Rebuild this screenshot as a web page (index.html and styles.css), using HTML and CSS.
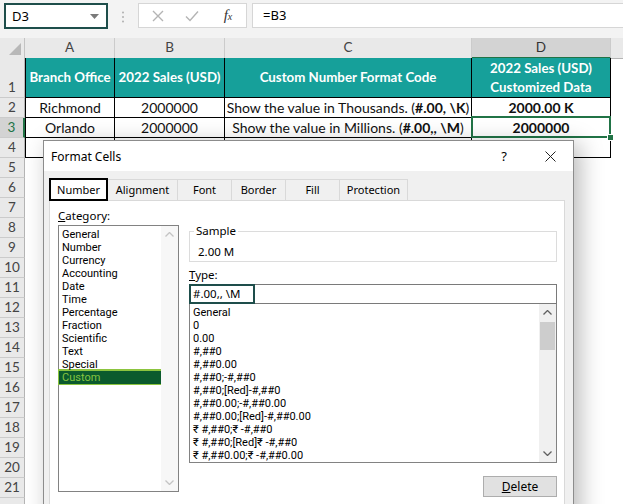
FILE: index.html
```html
<!DOCTYPE html>
<html lang="en">
<head>
  <meta charset="UTF-8">
  <title>Format Cells - Custom</title>
  <link rel="stylesheet" href="styles.css">
</head>
<body>
  <div class="fbar">
    <div class="namebox">
      <span>D3</span>
      <svg width="9" height="5" viewBox="0 0 9 5"><path d="M0 0h9L4.5 5z" fill="#7a7a7a"/></svg>
    </div>
    <svg class="dots" width="4" height="12" viewBox="0 0 4 12">
      <circle cx="2" cy="1.5" r="1" fill="#b0b0b0"/>
      <circle cx="2" cy="6" r="1" fill="#b0b0b0"/>
      <circle cx="2" cy="10.5" r="1" fill="#b0b0b0"/>
    </svg>
    <div class="fxbox">
      <svg width="12" height="12" viewBox="0 0 12 12"><path d="M1 1l10 10M11 1L1 11" stroke="#b4b4b4" stroke-width="1.4"/></svg>
      <svg width="14" height="12" viewBox="0 0 14 12"><path d="M1 6.5l4 4L13 1.5" stroke="#b4b4b4" stroke-width="1.4" fill="none"/></svg>
      <span class="fx">f<small>x</small></span>
    </div>
    <div class="formula">=B3</div>
  </div>

  <div class="sheet">
    <div class="row head">
      <div class="corner"><svg width="12" height="12" viewBox="0 0 12 12"><path d="M12 0v12H0z" fill="#b8b8b8"/></svg></div>
      <div class="ch">A</div>
      <div class="ch">B</div>
      <div class="ch">C</div>
      <div class="ch sel">D</div>
      <div class="ch last"></div>
    </div>
    <div class="row r1">
      <div class="rh">1</div>
      <div class="c t first">Branch Office</div>
      <div class="c t">2022 Sales (USD)</div>
      <div class="c t">Custom Number Format Code</div>
      <div class="c t">2022 Sales (USD)<br>Customized Data</div>
    </div>
    <div class="row">
      <div class="rh">2</div>
      <div class="c first">Richmond</div>
      <div class="c">2000000</div>
      <div class="c">Show the value in Thousands. (<b>#.00, \K</b>)</div>
      <div class="c"><b>2000.00 K</b></div>
    </div>
    <div class="row">
      <div class="rh sel">3</div>
      <div class="c first">Orlando</div>
      <div class="c">2000000</div>
      <div class="c">Show the value in Millions. (<b>#.00,, \M</b>)</div>
      <div class="c active"><b>2000000</b></div>
    </div>
    <div class="row">
      <div class="rh">4</div>
      <div class="c first"></div>
      <div class="c"></div>
      <div class="c"></div>
      <div class="c"></div>
    </div>
    <div class="row"><div class="rh">5</div></div>
    <div class="row"><div class="rh">6</div></div>
    <div class="row"><div class="rh">7</div></div>
    <div class="row"><div class="rh">8</div></div>
    <div class="row"><div class="rh">9</div></div>
    <div class="row"><div class="rh">10</div></div>
    <div class="row"><div class="rh">11</div></div>
    <div class="row"><div class="rh">12</div></div>
    <div class="row"><div class="rh">13</div></div>
    <div class="row"><div class="rh">14</div></div>
    <div class="row"><div class="rh">15</div></div>
    <div class="row"><div class="rh">16</div></div>
    <div class="row"><div class="rh">17</div></div>
    <div class="row"><div class="rh">18</div></div>
    <div class="row"><div class="rh">19</div></div>
    <div class="row"><div class="rh">20</div></div>
    <div class="row"><div class="rh">21</div></div>
    <div class="row"><div class="rh"></div></div>
  </div>

  <div class="dlg">
    <div class="dlg-head">
      <span class="dlg-title">Format Cells</span>
      <span class="hbtn">?</span>
      <span class="hbtn">
        <svg width="11" height="11" viewBox="0 0 11 11"><path d="M0.5 0.5l10 10M10.5 0.5l-10 10" stroke="#222" stroke-width="1"/></svg>
      </span>
    </div>
    <div class="dlg-body">
      <div class="tabs">
        <div class="tab on" style="width:59px">Number</div>
        <div class="tab" style="width:71px">Alignment</div>
        <div class="tab" style="width:55px">Font</div>
        <div class="tab" style="width:55px">Border</div>
        <div class="tab" style="width:55px">Fill</div>
        <div class="tab" style="width:69px">Protection</div>
      </div>
      <div class="panel">
        <div class="left">
          <div class="lbl"><u>C</u>ategory:</div>
          <div class="lst cat">
            <div class="items">
              <div>General</div>
              <div>Number</div>
              <div>Currency</div>
              <div>Accounting</div>
              <div>Date</div>
              <div>Time</div>
              <div>Percentage</div>
              <div>Fraction</div>
              <div>Scientific</div>
              <div>Text</div>
              <div>Special</div>
              <div class="pick">Custom</div>
            </div>
            <div class="sbar off">
              <div class="arr"><svg width="9" height="5" viewBox="0 0 9 5"><path d="M0.5 4.5l4-4 4 4" stroke="#c4c4c4" stroke-width="1.3" fill="none"/></svg></div>
              <div class="fill"></div>
              <div class="arr"><svg width="9" height="5" viewBox="0 0 9 5"><path d="M0.5 0.5l4 4 4-4" stroke="#c4c4c4" stroke-width="1.3" fill="none"/></svg></div>
            </div>
          </div>
        </div>
        <div class="right">
          <fieldset class="sample">
            <legend>Sample</legend>
            2.00 M
          </fieldset>
          <div class="lbl type"><u>T</u>ype:</div>
          <div class="inp"><span class="hl">#.00,, \M</span></div>
          <div class="lst codes">
            <div class="items">
              <div>General</div>
              <div>0</div>
              <div>0.00</div>
              <div>#,##0</div>
              <div>#,##0.00</div>
              <div>#,##0;-#,##0</div>
              <div>#,##0;[Red]-#,##0</div>
              <div>#,##0.00;-#,##0.00</div>
              <div>#,##0.00;[Red]-#,##0.00</div>
              <div>₹ #,##0;₹ -#,##0</div>
              <div>₹ #,##0;[Red]₹ -#,##0</div>
              <div>₹ #,##0.00;₹ -#,##0.00</div>
            </div>
            <div class="sbar">
              <div class="arr"><svg width="9" height="5" viewBox="0 0 9 5"><path d="M0.5 4.5l4-4 4 4" stroke="#606060" stroke-width="1.3" fill="none"/></svg></div>
              <div class="thumb"></div>
              <div class="fill"></div>
              <div class="arr"><svg width="9" height="5" viewBox="0 0 9 5"><path d="M0.5 0.5l4 4 4-4" stroke="#606060" stroke-width="1.3" fill="none"/></svg></div>
            </div>
          </div>
          <div class="btn"><u>D</u>elete</div>
        </div>
      </div>
    </div>
  </div>
</body>
</html>
```

FILE: styles.css
```css
body {
  margin: 0;
  width: 623px;
  height: 504px;
  overflow: hidden;
  position: relative;
  background: #fff;
  font-family: "Noto Sans", sans-serif;
  color: #000;
}

/* formula bar */
.fbar {
  height: 38px;
  box-sizing: border-box;
  background: #f3f3f3;
  display: flex;
  align-items: flex-start;
  padding: 3px 0 0 4px;
}
.namebox {
  width: 104px;
  height: 26px;
  box-sizing: border-box;
  border: 2px solid #1e4e4b;
  background: #fff;
  display: flex;
  align-items: center;
  justify-content: space-between;
  padding: 0 7px 0 6px;
  font-size: 13px;
}
.dots { margin: 8px 0 0 13px; }
.fxbox {
  margin-left: 13px;
  width: 109px;
  height: 25px;
  box-sizing: border-box;
  border: 1px solid #d6d6d6;
  background: #fff;
  display: grid;
  grid-template-columns: 37px 31px 1fr;
  align-items: center;
  justify-items: center;
}
.fx {
  font-family: "Liberation Serif", serif;
  font-style: italic;
  font-size: 15px;
  color: #333;
  padding-left: 3px;
}
.fx small { font-size: 10px; }
.formula {
  flex: 1;
  margin-left: 5px;
  height: 25px;
  box-sizing: border-box;
  border: 1px solid #d6d6d6;
  border-right: none;
  background: #fff;
  padding-left: 10px;
  line-height: 23px;
  font-size: 13px;
}

/* sheet */
.sheet { font-family: Lato, sans-serif; font-size: 13.5px; }
.row {
  display: grid;
  grid-template-columns: 25px 90px 110px 247px 139px 12px;
  height: 20px;
}
.row > div { box-sizing: border-box; }
.row.r1 { height: 40px; }
.corner, .ch, .rh {
  background: #e9e9e9;
  color: #444;
}
.corner {
  border-right: 1px solid #c3c3c3;
  border-bottom: 1px solid #b5b5b5;
  display: flex;
  align-items: flex-end;
  justify-content: flex-end;
  padding: 0 3px 3px 0;
}
.ch {
  border-right: 1px solid #cbcbcb;
  border-bottom: 1px solid #b5b5b5;
  text-align: center;
  line-height: 19px;
}
.ch.last { border-right: none; }
.ch.sel {
  background: #d3d3d3;
  border-bottom: 2px solid #217346;
  color: #333;
}
.rh {
  border-right: 1px solid #b5b5b5;
  border-bottom: 1px solid #cbcbcb;
  display: flex;
  align-items: flex-end;
  justify-content: center;
  padding-bottom: 1px;
  line-height: 17px;
}
.rh.sel {
  background: #d3d3d3;
  border-right: 2px solid #217346;
  color: #217346;
}
.c {
  border-right: 1px solid #000;
  border-bottom: 1px solid #000;
  display: flex;
  align-items: center;
  justify-content: center;
  text-align: center;
  white-space: nowrap;
  color: #111;
  font-size: 14px;
}
.c.first { border-left: 1px solid #000; }
.c.t {
  background: #16a09a;
  color: #fff;
  font-weight: bold;
  font-size: 13.3px;
  line-height: 19px;
}
.c.active { position: relative; }
.c.active::after {
  content: "";
  position: absolute;
  left: -1px;
  top: -2px;
  right: -1px;
  bottom: -1px;
  border: 2px solid #217346;
}
.c.active::before {
  content: "";
  position: absolute;
  right: -4px;
  bottom: -4px;
  width: 5px;
  height: 5px;
  background: #217346;
  border: 1px solid #fff;
  z-index: 1;
}

/* dialog */
.dlg {
  position: absolute;
  left: 43px;
  top: 140px;
  width: 531px;
  height: 390px;
  box-sizing: border-box;
  border: 1px solid #8c8c8c;
  background: #f0f0f0;
  box-shadow: 6px 4px 22px rgba(0, 0, 0, 0.28);
  font-size: 11px;
}
.dlg-head {
  height: 30px;
  background: #fff;
  display: flex;
  align-items: center;
  padding-left: 7px;
  font-size: 12px;
}
.dlg-title { flex: 1; }
.hbtn {
  width: 46px;
  text-align: center;
  font-size: 13px;
  display: flex;
  justify-content: center;
}
.dlg-body { padding: 8px 8px 0 5px; }
.tabs { display: flex; height: 21px; }
.tab {
  box-sizing: border-box;
  height: 21px;
  border: 1px solid #d9d9d9;
  border-bottom: none;
  margin-right: -1px;
  background: #f0f0f0;
  text-align: center;
  line-height: 20px;
  font-size: 11px;
}
.tab.on {
  background: #fff;
  border: 2px solid #000;
  height: 23px;
  margin-top: -1px;
  line-height: 19px;
  position: relative;
  z-index: 1;
}
.panel {
  background: #fff;
  border: 1px solid #d9d9d9;
  height: 320px;
  display: flex;
  gap: 10px;
  padding: 8px 0 0 8px;
}
.left { width: 121px; }
.right { width: 368px; padding-top: 15px; display: flex; flex-direction: column; }
.lbl { line-height: 14px; font-size: 11.5px; }
.lst {
  box-sizing: border-box;
  border: 1px solid #828282;
  background: #fff;
  display: flex;
}
.items {
  flex: 1;
  padding-top: 2px;
  font-family: Roboto, "Noto Sans", sans-serif;
  font-size: 11px;
}
.items div { line-height: 13px; padding-left: 3px; white-space: nowrap; }
.cat { margin-top: 2px; height: 267px; }
.cat .pick {
  background: #0b5a2d;
  color: #86c440;
  margin: -2px 0 0 -1px;
  border-top: 2px solid #8cc43f;
  border-bottom: 1px solid #8cc43f;
  border-left: 1px solid #8cc43f;
}
.sbar {
  width: 17px;
  background: #f0f0f0;
  display: flex;
  flex-direction: column;
}
.sbar.off { background: #f7f7f7; }
.arr {
  height: 17px;
  display: flex;
  align-items: center;
  justify-content: center;
}
.thumb { height: 28px; margin: 1px 1px 0; background: #cdcdcd; }
.fill { flex: 1; }
.sample {
  margin: 0;
  padding: 7px 8px 2px;
  border: 1px solid #dcdcdc;
  line-height: 14px;
  font-size: 11.5px;
}
.sample legend {
  padding: 0 2px;
  margin-left: -4px;
  line-height: 14px;
}
.type { margin-top: 6px; }
.inp {
  margin-top: 2px;
  height: 20px;
  box-sizing: border-box;
  border: 1px solid #7a7a7a;
  display: flex;
}
.hl {
  height: 20px;
  box-sizing: border-box;
  margin: -1px 0 0 -1px;
  width: 66px;
  border: 2px solid #1e4e4b;
  padding-left: 2px;
  line-height: 16px;
  font-size: 11.5px;
}
.codes { height: 159px; border-top: none; }
.btn {
  margin: 13px 0 0 auto;
  width: 74px;
  height: 21px;
  box-sizing: border-box;
  border: 1px solid #adadad;
  background: #e1e1e1;
  text-align: center;
  line-height: 19px;
  font-size: 12px;
}
```
